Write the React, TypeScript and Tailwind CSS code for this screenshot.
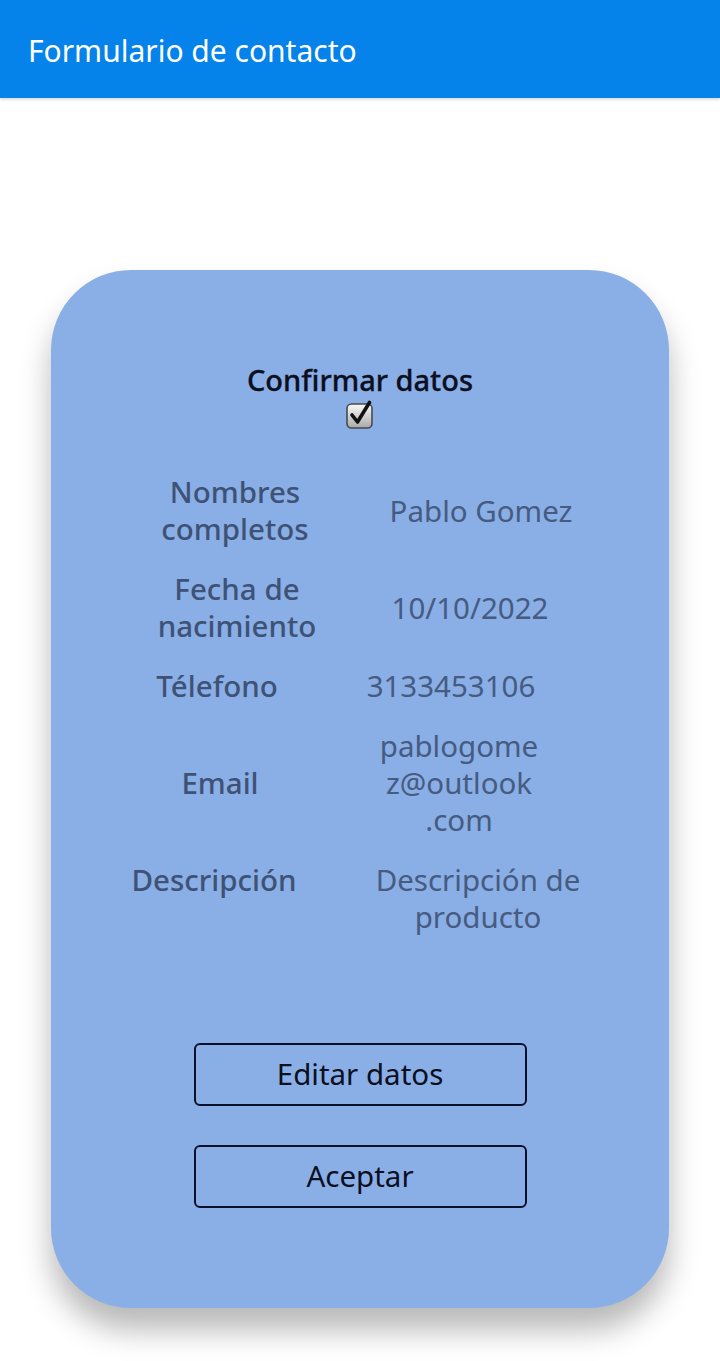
import React from 'react';

const rows = [
  { label: ['Nombres', 'completos'], value: ['Pablo Gomez'], lc: 'ml-[94px] w-[180px]', vc: 'ml-[56px] w-[200px]', align: 'items-center' },
  { label: ['Fecha de', 'nacimiento'], value: ['10/10/2022'], lc: 'ml-[96px] w-[180px]', vc: 'ml-[43px] w-[200px]', align: 'items-center' },
  { label: ['Télefono'], value: ['3133453106'], lc: 'ml-[76px] w-[180px]', vc: 'ml-[49px] w-[190px]', align: 'items-center' },
  { label: ['Email'], value: ['pablogome', 'z@outlook', '.com'], lc: 'ml-[79px] w-[180px]', vc: 'ml-[59px] w-[180px]', align: 'items-center' },
  { label: ['Descripción'], value: ['Descripción de', 'producto'], lc: 'ml-[73px] w-[180px]', vc: 'ml-[59px] w-[230px]', align: 'items-start' },
];

const CheckIcon = () => (
  <svg width="30" height="30" viewBox="0 0 30 30">
    <defs>
      <linearGradient id="box" x1="0" y1="0" x2="0" y2="1">
        <stop offset="0" stopColor="#fafafa" />
        <stop offset="1" stopColor="#a9a9a9" />
      </linearGradient>
    </defs>
    <rect x="2" y="5" width="25" height="24" rx="4.5" fill="url(#box)" stroke="#4a4a4a" strokeWidth="1.6" />
    <path d="M7 16 L12.5 23 L24.5 3.5" fill="none" stroke="#111" strokeWidth="3.6" strokeLinecap="round" strokeLinejoin="round" />
  </svg>
);

export default function App() {
  return (
    <div className="min-h-[1361px] bg-white font-['Noto_Sans',sans-serif]">
      <header className="h-[98px] bg-[#0583ea] flex items-center pl-7 shadow-[0_2px_2px_rgba(0,0,0,0.12)]">
        <h1 className="text-white text-[30px] leading-none pt-[3px]">Formulario de contacto</h1>
      </header>

      <main className="pt-[172px] pb-[53px] flex justify-center">
        <div className="w-[618px] h-[1038px] rounded-[80px] bg-[#8aaee6] shadow-[0_22px_30px_rgba(0,0,0,0.28)] flex flex-col pt-[92px]">
          <div className="flex flex-col items-center">
            <h2 className="text-[29px] leading-[36px] font-medium text-[#0b0f1e] [-webkit-text-stroke:0.3px_#0b0f1e]">Confirmar datos</h2>
            <div className="mt-[1px]">
              <CheckIcon />
            </div>
          </div>

          <div className="mt-[44px] flex flex-col gap-[23px]">
            {rows.map((r) => (
              <div key={r.label.join(' ')} className={`flex ${r.align}`}>
                <div className={`${r.lc} text-center text-[29.5px] leading-[37px] font-medium text-[#3e5275]`}>
                  {r.label.map((l) => (
                    <div key={l}>{l}</div>
                  ))}
                </div>
                <div className={`${r.vc} text-center text-[29.5px] leading-[37px] text-[#465b80]`}>
                  {r.value.map((v) => (
                    <div key={v}>{v}</div>
                  ))}
                </div>
              </div>
            ))}
          </div>

          <div className="mt-[108px] flex flex-col items-center gap-[39px]">
            {['Editar datos', 'Aceptar'].map((b) => (
              <button
                key={b}
                className="w-[333px] h-[63px] border-2 border-[#0a0f2a] rounded-[6px] text-[29.5px] text-[#0b0f1e] flex items-center justify-center"
              >
                {b}
              </button>
            ))}
          </div>
        </div>
      </main>
    </div>
  );
}
